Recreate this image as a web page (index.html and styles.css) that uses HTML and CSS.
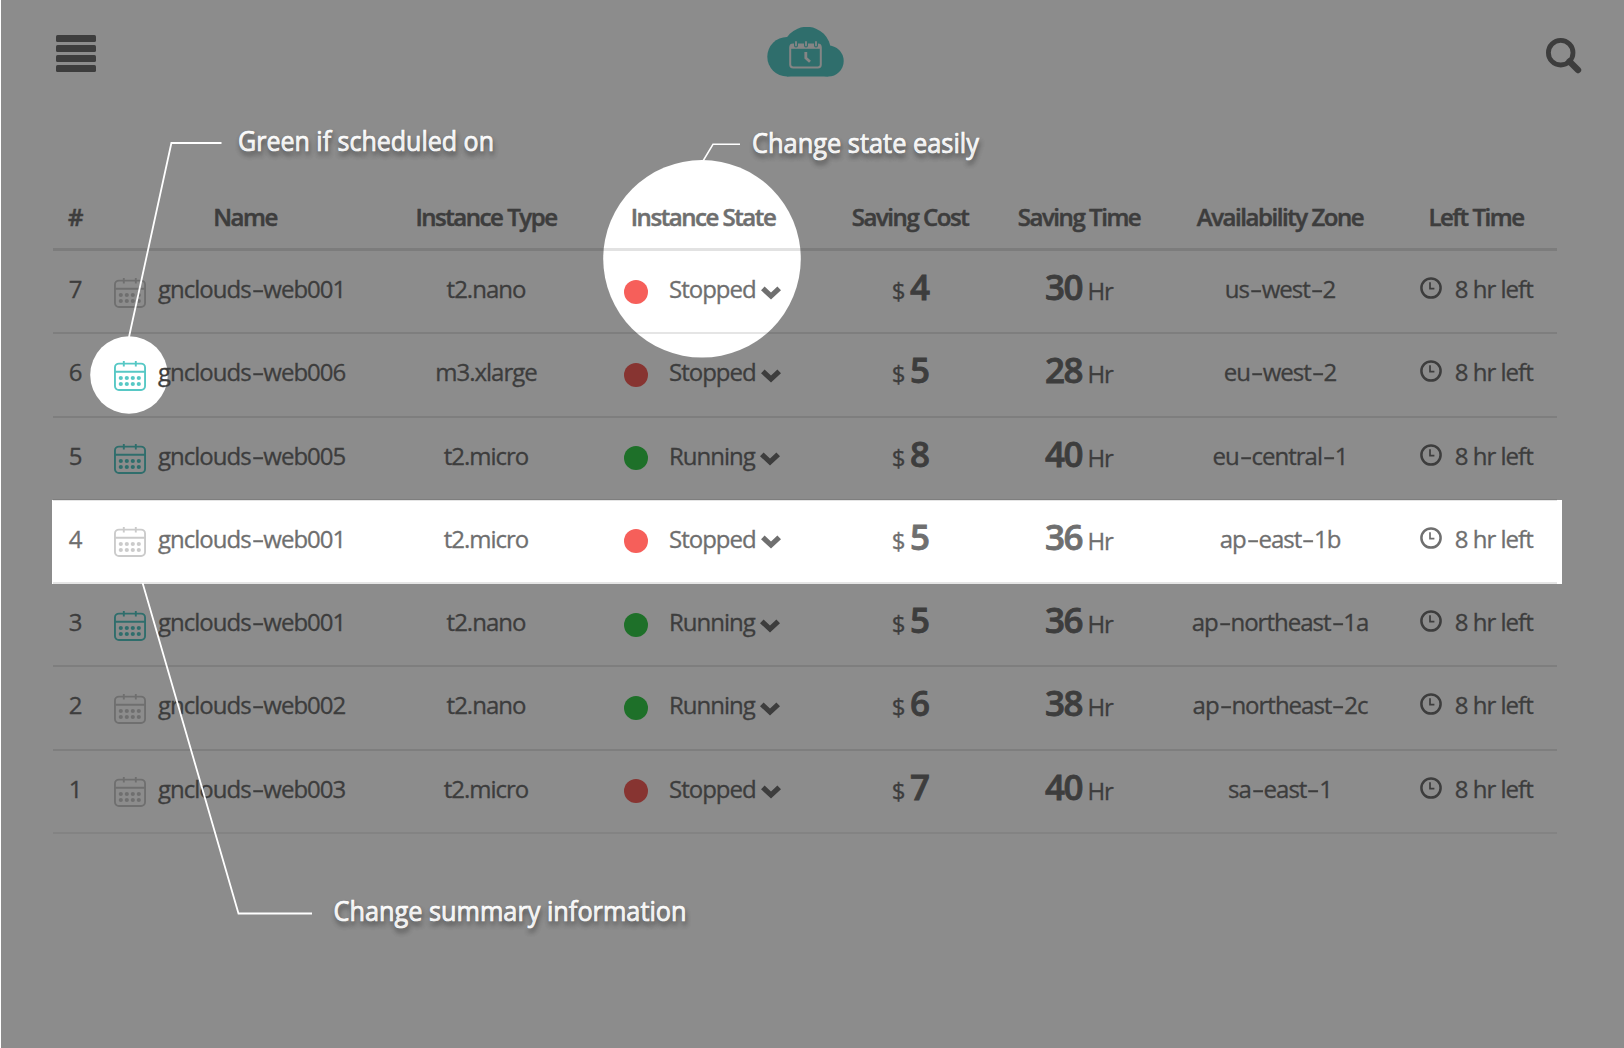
FILE: index.html
```html
<!DOCTYPE html>
<html lang="en">
<head>
<meta charset="utf-8">
<title>Instances</title>
<link rel="stylesheet" href="styles.css">
</head>
<body>
<svg class="sprite" aria-hidden="true">
  <symbol id="cal" viewBox="0 0 32 30">
    <g fill="none" stroke="currentColor" stroke-width="1.9">
      <rect x=".95" y="2.6" width="30.1" height="26.4" rx="4"/>
      <path d="M1 10.8H31M9.8 0V5.6M21.8 0V5.6"/>
    </g>
    <g fill="currentColor">
      <circle cx="6.8" cy="17" r="2.1"/><circle cx="12.8" cy="17" r="2.1"/><circle cx="18.8" cy="17" r="2.1"/><circle cx="24.8" cy="17" r="2.1"/>
      <circle cx="6.8" cy="23" r="2.1"/><circle cx="12.8" cy="23" r="2.1"/><circle cx="18.8" cy="23" r="2.1"/><circle cx="24.8" cy="23" r="2.1"/>
    </g>
  </symbol>
  <symbol id="chev" viewBox="0 0 20 14"><path d="M0 4.2L3.6 .6L10 6.6L16.4 .6L20 4.2L10 13.6Z" fill="currentColor"/></symbol>
  <symbol id="clock" viewBox="0 0 22 22"><g fill="none" stroke="currentColor"><circle cx="11" cy="11" r="9.6" stroke-width="2.5"/><path d="M10 5.2V11.6H14.4" stroke-width="1.7"/></g></symbol>
</svg>

<header class="topbar">
  <svg class="menu" viewBox="0 0 40 37"><g fill="currentColor"><rect width="40" height="7" rx="1.6"/><rect y="10" width="40" height="7" rx="1.6"/><rect y="20" width="40" height="7" rx="1.6"/><rect y="30" width="40" height="7" rx="1.6"/></g></svg>
  <svg class="logo" viewBox="0 0 78 50">
    <g fill="#57c8c5"><circle cx="20" cy="29.8" r="19.7"/><circle cx="39.8" cy="23.8" r="24"/><circle cx="61.2" cy="34" r="15.5"/><path d="M20 30H61.2V49.5H20Z"/></g>
    <g fill="none" stroke="#f2f2f2">
      <rect x="23.2" y="17.6" width="30.6" height="23" rx="3" stroke-width="2"/>
      <path d="M23.5 19.6H53.5" stroke-width="4.4"/>
      <path d="M29 15V18.6M39 15V18.6M49 15V18.6" stroke="#57c8c5" stroke-width="4" stroke-linecap="round"/>
      <path d="M29 15V18.4M39 15V18.4M49 15V18.4" stroke-width="1.8" stroke-linecap="round"/>
      <path d="M38.8 25V31L43 34.8" stroke-width="2.8"/>
    </g>
  </svg>
  <svg class="search" viewBox="0 0 36 36"><g fill="none" stroke="currentColor"><circle cx="14.7" cy="14.7" r="12.3" stroke-width="4.8"/><path d="M23.5 23.5L32 32" stroke-width="6.4" stroke-linecap="round"/></g></svg>
</header>

<main class="table">
  <div class="row head"><div>#</div><div>Name</div><div>Instance Type</div><div>Instance State</div><div>Saving Cost</div><div>Saving Time</div><div>Availability Zone</div><div>Left Time</div></div>

  <div class="row"><div>7</div><div class="name"><svg class="cal"><use href="#cal"/></svg><span>gnclouds<i>-</i>web001</span></div><div>t2.nano</div><div class="state"><b class="dot"></b><span>Stopped</span><svg class="chev"><use href="#chev"/></svg></div><div class="num"><span>$</span><strong>4</strong></div><div class="num"><strong>30</strong><span>Hr</span></div><div>us<i>-</i>west<i>-</i>2</div><div class="left"><svg class="clock"><use href="#clock"/></svg><span>8 hr left</span></div></div>

  <div class="row"><div>6</div><div class="name"><svg class="cal on"><use href="#cal"/></svg><span class="above">gnclouds<i>-</i>web006</span></div><div>m3.xlarge</div><div class="state"><b class="dot"></b><span>Stopped</span><svg class="chev"><use href="#chev"/></svg></div><div class="num"><span>$</span><strong>5</strong></div><div class="num"><strong>28</strong><span>Hr</span></div><div>eu<i>-</i>west<i>-</i>2</div><div class="left"><svg class="clock"><use href="#clock"/></svg><span>8 hr left</span></div></div>

  <div class="row"><div>5</div><div class="name"><svg class="cal on"><use href="#cal"/></svg><span>gnclouds<i>-</i>web005</span></div><div>t2.micro</div><div class="state"><b class="dot run"></b><span>Running</span><svg class="chev"><use href="#chev"/></svg></div><div class="num"><span>$</span><strong>8</strong></div><div class="num"><strong>40</strong><span>Hr</span></div><div>eu<i>-</i>central<i>-</i>1</div><div class="left"><svg class="clock"><use href="#clock"/></svg><span>8 hr left</span></div></div>

  <div class="row"><div>4</div><div class="name"><svg class="cal"><use href="#cal"/></svg><span>gnclouds<i>-</i>web001</span></div><div>t2.micro</div><div class="state"><b class="dot"></b><span>Stopped</span><svg class="chev"><use href="#chev"/></svg></div><div class="num"><span>$</span><strong>5</strong></div><div class="num"><strong>36</strong><span>Hr</span></div><div>ap<i>-</i>east<i>-</i>1b</div><div class="left"><svg class="clock"><use href="#clock"/></svg><span>8 hr left</span></div></div>

  <div class="row"><div>3</div><div class="name"><svg class="cal on"><use href="#cal"/></svg><span>gnclouds<i>-</i>web001</span></div><div>t2.nano</div><div class="state"><b class="dot run"></b><span>Running</span><svg class="chev"><use href="#chev"/></svg></div><div class="num"><span>$</span><strong>5</strong></div><div class="num"><strong>36</strong><span>Hr</span></div><div>ap<i>-</i>northeast<i>-</i>1a</div><div class="left"><svg class="clock"><use href="#clock"/></svg><span>8 hr left</span></div></div>

  <div class="row"><div>2</div><div class="name"><svg class="cal"><use href="#cal"/></svg><span>gnclouds<i>-</i>web002</span></div><div>t2.nano</div><div class="state"><b class="dot run"></b><span>Running</span><svg class="chev"><use href="#chev"/></svg></div><div class="num"><span>$</span><strong>6</strong></div><div class="num"><strong>38</strong><span>Hr</span></div><div>ap<i>-</i>northeast<i>-</i>2c</div><div class="left"><svg class="clock"><use href="#clock"/></svg><span>8 hr left</span></div></div>

  <div class="row"><div>1</div><div class="name"><svg class="cal"><use href="#cal"/></svg><span>gnclouds<i>-</i>web003</span></div><div>t2.micro</div><div class="state"><b class="dot"></b><span>Stopped</span><svg class="chev"><use href="#chev"/></svg></div><div class="num"><span>$</span><strong>7</strong></div><div class="num"><strong>40</strong><span>Hr</span></div><div>sa<i>-</i>east<i>-</i>1</div><div class="left"><svg class="clock"><use href="#clock"/></svg><span>8 hr left</span></div></div>
</main>

<!-- dimmed layer with spotlight cut-outs -->
<svg class="layer dim" viewBox="0 0 1624 1048">
  <mask id="spots" maskUnits="userSpaceOnUse" x="0" y="0" width="1624" height="1048">
    <rect x="1" width="1623" height="1048" fill="#fff"/>
    <circle cx="702" cy="258.8" r="98.8"/>
    <circle cx="129" cy="375" r="38.8"/>
    <rect x="52" y="500" width="1510" height="84"/>
  </mask>
  <rect width="1624" height="1048" fill="#000" fill-opacity=".45" mask="url(#spots)"/>
</svg>

<!-- leader lines and callouts -->
<svg class="layer notes" viewBox="0 0 1624 1048">
  <g fill="none" stroke="#fff">
    <path d="M129 337L171.4 143H221.5" stroke-width="1.8"/>
    <path d="M703 161L713 144.3H740" stroke-width="1.5"/>
    <path d="M142.6 583L238.5 913.5H312" stroke-width="1.8"/>
  </g>
  <g class="callouts">
    <text x="238" y="151" textLength="256" lengthAdjust="spacingAndGlyphs">Green if scheduled on</text>
    <text x="752" y="153" textLength="227" lengthAdjust="spacingAndGlyphs">Change state easily</text>
    <text x="333.5" y="921" textLength="353" lengthAdjust="spacingAndGlyphs">Change summary information</text>
  </g>
</svg>
</body>
</html>
```
FILE: styles.css
```css
* { box-sizing: border-box; }
body {
  margin: 0;
  width: 1624px;
  height: 1048px;
  overflow: hidden;
  position: relative;
  background: #fff;
  color: #6f6f6f;
  font-family: "Open Sans", "Noto Sans", sans-serif;
  font-size: 24px;
  line-height: 32px;
  font-stretch: 90%;
  letter-spacing: -1px;
  -webkit-text-stroke: .3px currentColor;
}
.sprite { position: absolute; width: 0; height: 0; }

.topbar {
  height: 172px;
  padding: 27px 42.5px 0 56px;
  display: flex;
  justify-content: space-between;
  align-items: flex-start;
}
.menu { width: 40px; height: 37px; margin-top: 8px; }
.logo { width: 78px; height: 50px; margin-left: -30px; }
.search { width: 36px; height: 36px; margin-top: 11px; }

.table { width: 1504px; margin-left: 53px; }
.row {
  display: grid;
  grid-template-columns: 44px 296px 186px 248px 166px 172px 230px 162px;
  height: 83.25px;
  border-bottom: 2px solid #e5e5e5;
  text-align: center;
  align-items: start;
  padding-top: 22px;
  white-space: nowrap;
}
.head {
  height: 79px;
  padding-top: 29px;
  border-bottom: 3px solid #e2e2e2;
  font-weight: 600;
  letter-spacing: -1.45px;
  -webkit-text-stroke-width: .5px;
}
.row:last-child { border-bottom-color: #efefef; }
.row i { display: inline-block; font-style: normal; transform: scaleX(1.6); margin: 0 3px; }

.name { display: flex; text-align: left; }
.cal { width: 32px; height: 30px; margin: 4.5px 12.5px 0 16.5px; color: #cbcbcb; }
.cal.on { color: #57c8c5; }
.above { position: relative; z-index: 2; color: #3d3d3d; }

.state { display: flex; text-align: left; }
.dot { width: 24px; height: 24px; margin: 6.5px 21px 0 45px; border-radius: 50%; background: #f65f5a; }
.dot.run { background: #38cc4b; }
.chev { width: 20px; height: 14px; margin: 12.5px 0 0 5.5px; }

.num { display: flex; justify-content: center; align-items: baseline; gap: 5.5px; margin: -2px 0 0; }
.num strong { font-size: 35px; font-weight: 600; letter-spacing: -1.6px; -webkit-text-stroke-width: .8px; }

.left { display: flex; justify-content: center; }
.clock { width: 22px; height: 22px; margin: 4px 13px 0 .5px; }

.layer { position: absolute; left: 0; top: 0; width: 1624px; height: 1048px; }
.dim { z-index: 1; }
.notes { z-index: 3; }
.callouts {
  fill: #fff;
  stroke: #fff;
  stroke-width: .7px;
  font-size: 27px;
  letter-spacing: 0;
  text-shadow: 1px 4px 5px rgba(0, 0, 0, .35);
}
```
